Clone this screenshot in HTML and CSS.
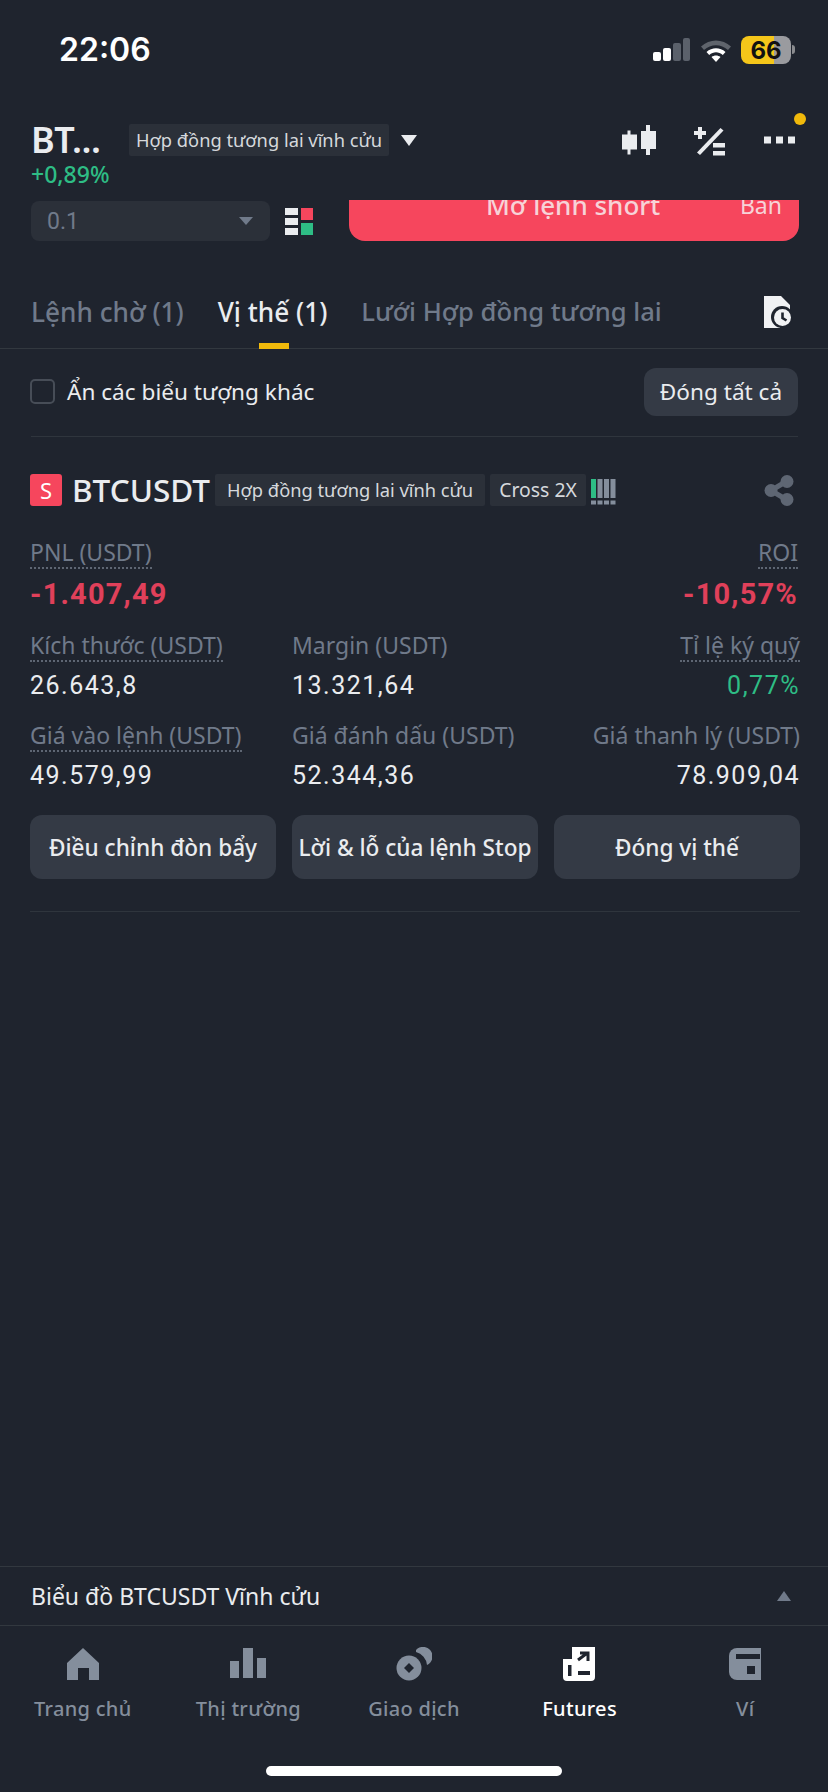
FILE: index.html
```html
<!DOCTYPE html>
<html lang="vi">
<head>
<meta charset="utf-8">
<title>BTCUSDT Futures</title>
<link rel="stylesheet" href="styles.css">
</head>
<body>
<div class="screen">
  <div class="status">
    <span class="time">22:06</span>
    <div class="status-icons">
      <svg class="signal" width="38" height="24" viewBox="0 0 38 24"><rect x="0" y="14" width="8" height="9" rx="2" fill="#fff"/><rect x="10" y="10" width="8" height="13" rx="2" fill="#fff"/><rect x="20" y="5" width="8" height="18" rx="2" fill="#5b616b"/><rect x="30" y="0" width="7" height="23" rx="2" fill="#5b616b"/></svg>
      <svg class="wifi" width="32" height="24" viewBox="0 0 32 24"><path d="M1 8.500C9.500 0.500 22.500 0.500 31 8.500L28 12C21 5.500 11 5.500 4 12Z" fill="#5f646c"/><path d="M6.500 14C12 9 20 9 25.500 14L22.800 17C18.500 13.400 13.500 13.400 9.200 17Z" fill="#fff"/><path d="M11.500 19C14.200 17 17.800 17 20.500 19L16 24Z" fill="#fff"/></svg>
      <div class="battery"><span>66</span></div>
      <span class="battery-nub"></span>
    </div>
  </div>

  <div class="head">
    <div class="head-top">
      <span class="pair">BT...</span>
      <span class="tag head-tag">Hợp đồng tương lai vĩnh cửu</span>
      <span class="caret-white"></span>
      <div class="head-icons">
        <svg width="34" height="31" viewBox="0 0 34 31"><path d="M5.500 5.500h3v4H15v15H8.500v5h-3v-5H0v-15h5.500z" fill="#eaecef"/><path d="M24 0h4v6h6v18h-6v6h-4v-6h-5V6h5z" fill="#eaecef"/></svg>
        <svg width="32" height="31" viewBox="0 0 32 31"><path d="M4 2h4v4h4v4H8v4H4v-4H0V6h4z" fill="#eaecef"/><path d="M26.500 3l3 2.500L6 30l-3-2.500z" fill="#eaecef"/><rect x="19" y="18" width="12" height="4.500" fill="#eaecef"/><rect x="19" y="26" width="12" height="4.500" fill="#eaecef"/></svg>
        <div class="more">
          <svg width="31" height="8" viewBox="0 0 31 8"><rect x="0" y="0.500" width="7" height="7" fill="#eaecef"/><rect x="12" y="0.500" width="7" height="7" fill="#eaecef"/><rect x="24" y="0.500" width="7" height="7" fill="#eaecef"/></svg>
          <span class="dot"></span>
        </div>
      </div>
    </div>
    <div class="change">+0,89%</div>
  </div>

  <div class="order-row">
    <div class="select"><span>0.1</span><span class="caret-grey"></span></div>
    <svg class="book" width="29" height="28" viewBox="0 0 29 28"><rect x="0" y="1" width="13" height="7" fill="#eaecef"/><rect x="0" y="11" width="13" height="7" fill="#eaecef"/><rect x="0" y="21" width="13" height="7" fill="#eaecef"/><rect x="16" y="1" width="12" height="12" fill="#f6465d"/><rect x="16" y="16" width="12" height="12" fill="#2ebd85"/></svg>
    <div class="short"><span class="short-title">Mở lệnh short</span><span class="short-side">Bán</span></div>
  </div>

  <div class="tabs">
    <span class="tab">Lệnh chờ (1)</span>
    <span class="tab active">Vị thế (1)</span>
    <span class="tab tab-grid">Lưới Hợp đồng tương lai</span>
    <svg class="history" width="29" height="32" viewBox="0 0 29 32"><path d="M0 0h17l9 9v14H16v9H0z" fill="#f1f2f4"/><circle cx="18" cy="21" r="11" fill="#1f242e"/><circle cx="18.500" cy="21.500" r="8.500" fill="#f1f2f4"/><path d="M18.500 16.500v5.500l4 2.500" stroke="#1f242e" stroke-width="2.600" fill="none"/></svg>
  </div>

  <div class="filter">
    <label class="check"><span class="box"></span>Ẩn các biểu tượng khác</label>
    <span class="btn-small">Đóng tất cả</span>
  </div>

  <div class="position">
    <div class="sym-row">
      <span class="side">S</span>
      <span class="symbol">BTCUSDT</span>
      <span class="tag">Hợp đồng tương lai vĩnh cửu</span>
      <span class="tag tag-cross">Cross 2X</span>
      <svg class="lev" width="25" height="26" viewBox="0 0 25 26"><rect x="0" y="0" width="5" height="19" fill="#2ebd85"/><rect x="6.500" y="0" width="5" height="19" fill="#848e9c"/><rect x="13" y="0" width="5" height="19" fill="#848e9c"/><rect x="19.500" y="0" width="5" height="19" fill="#848e9c"/><rect x="0" y="21.500" width="5" height="4" fill="#848e9c"/><rect x="6.500" y="21.500" width="5" height="4" fill="#848e9c"/><rect x="13" y="21.500" width="5" height="4" fill="#848e9c"/><rect x="19.500" y="21.500" width="5" height="4" fill="#848e9c"/></svg>
      <svg class="share" width="30" height="31" viewBox="0 0 30 31"><path d="M23 6L7 15.500L23 25" stroke="#5e6673" stroke-width="5" fill="none"/><circle cx="23" cy="6.500" r="6.500" fill="#5e6673"/><circle cx="7" cy="15.500" r="6.500" fill="#5e6673"/><circle cx="23" cy="24.500" r="6.500" fill="#5e6673"/></svg>
    </div>

    <div class="pnl">
      <div class="stat">
        <span class="label dotted">PNL (USDT)</span>
        <span class="big red">-1.407,49</span>
      </div>
      <div class="stat right">
        <span class="label dotted">ROI</span>
        <span class="big red">-10,57%</span>
      </div>
    </div>

    <div class="grid">
      <div class="stat"><span class="label dotted">Kích thước (USDT)</span><span class="val">26.643,8</span></div>
      <div class="stat"><span class="label">Margin (USDT)</span><span class="val">13.321,64</span></div>
      <div class="stat right"><span class="label dotted">Tỉ lệ ký quỹ</span><span class="val green">0,77%</span></div>
      <div class="stat"><span class="label dotted">Giá vào lệnh (USDT)</span><span class="val">49.579,99</span></div>
      <div class="stat"><span class="label">Giá đánh dấu (USDT)</span><span class="val">52.344,36</span></div>
      <div class="stat right"><span class="label">Giá thanh lý (USDT)</span><span class="val">78.909,04</span></div>
    </div>

    <div class="actions">
      <span class="btn">Điều chỉnh đòn bẩy</span>
      <span class="btn">Lời &amp; lỗ của lệnh Stop</span>
      <span class="btn">Đóng vị thế</span>
    </div>
  </div>

  <div class="spacer"></div>

  <div class="chart-bar">
    <span>Biểu đồ BTCUSDT Vĩnh cửu</span>
    <span class="caret-up"></span>
  </div>

  <nav class="nav">
    <div class="nav-item">
      <svg width="32" height="32" viewBox="0 0 32 32"><path d="M16 0L32 15V32H22V20H11V32H0V15Z" fill="#848e9c"/></svg>
      <span>Trang chủ</span>
    </div>
    <div class="nav-item">
      <svg width="36" height="32" viewBox="0 0 36 32"><rect x="0" y="13" width="9" height="17" fill="#848e9c"/><rect x="13" y="0" width="10" height="30" fill="#848e9c"/><rect x="27" y="10" width="9" height="20" fill="#848e9c"/></svg>
      <span>Thị trường</span>
    </div>
    <div class="nav-item">
      <svg width="36" height="32" viewBox="0 0 36 32"><path d="M20 2A9.500 9.500 0 1 1 31 17A15 15 0 0 0 20 4Z" fill="#848e9c"/><circle cx="13" cy="20" r="12.500" fill="#848e9c"/><path d="M13 15l5 5-5 5-5-5z" fill="#1f242e"/></svg>
      <span>Giao dịch</span>
    </div>
    <div class="nav-item active">
      <svg width="33" height="34" viewBox="0 0 33 34"><path d="M9 0H32V30a4 4 0 0 1-4 4H4a4 4 0 0 1-4-4V12H9Z" fill="#fff"/><path d="M15 13L23 7M17 6h8v8" stroke="#1f242e" stroke-width="3" fill="none"/><rect x="5" y="18" width="3.500" height="11" fill="#1f242e"/><rect x="15" y="24" width="12" height="4" fill="#1f242e"/></svg>
      <span>Futures</span>
    </div>
    <div class="nav-item">
      <svg width="32" height="32" viewBox="0 0 32 32"><path d="M8 0H32V32H8a8 8 0 0 1-8-8V8a8 8 0 0 1 8-8Z" fill="#848e9c"/><rect x="7" y="6" width="24" height="5" fill="#1f242e"/><rect x="18" y="18" width="8" height="8" fill="#1f242e"/></svg>
      <span>Ví</span>
    </div>
  </nav>

  <div class="home-wrap"><span class="home"></span></div>
</div>
</body>
</html>
```
FILE: styles.css
```css
* { box-sizing: border-box; }
html, body { margin: 0; padding: 0; }
body { background: #1f242e; font-family: "Noto Sans", "Open Sans", sans-serif; color: #eaecef; }
.screen { width: 828px; height: 1792px; display: flex; flex-direction: column; overflow: hidden; }

.status { height: 100px; padding: 30px 33px 0 59px; display: flex; justify-content: space-between; align-items: flex-start; }
.time { font-family: Inter, sans-serif; font-size: 32px; font-weight: 600; line-height: 40px; color: #fff; }
.status-icons { display: flex; align-items: flex-start; padding-top: 6px; }
.signal { margin: 2px 9px 0 0; }
.wifi { margin: 2px 9px 0 0; }
.battery { width: 50px; height: 28px; border-radius: 8px; background: linear-gradient(90deg, #f5c61a 0, #f5c61a 66%, #9a9b9f 66%, #9a9b9f 100%); display: flex; align-items: center; justify-content: center; font-family: Inter, sans-serif; font-weight: 700; font-size: 24px; color: #111; }
.battery-nub { width: 3px; height: 9px; margin: 9px 0 0 1px; border-radius: 0 3px 3px 0; background: #8a8b8f; }

.head { height: 100px; padding: 24px 30px 0 31px; }
.head-top { display: flex; align-items: center; height: 32px; }
.pair { font-size: 36px; font-weight: 600; line-height: 32px; width: 98px; color: #eaecef; letter-spacing: -0.5px; }
.tag { background: #2b3039; color: #d5d8dc; font-size: 18.3px; line-height: 32px; height: 32px; padding: 0 7px; border-radius: 2px; white-space: nowrap; }
.caret-white { width: 0; height: 0; margin-left: 12px; border-left: 8px solid transparent; border-right: 8px solid transparent; border-top: 11px solid #eaecef; }
.head-icons { margin-left: auto; display: flex; align-items: center; gap: 38px; padding-right: 3px; }
.more { position: relative; margin-top: -4px; }
.dot { position: absolute; right: -11px; top: -14px; width: 12px; height: 12px; border-radius: 50%; background: #f0b90b; }
.change { margin-top: 5px; font-size: 23px; font-weight: 500; line-height: 26px; color: #2ebd85; }

.order-row { height: 41px; padding: 0 29px 0 31px; display: flex; align-items: flex-start; }
.select { width: 239px; height: 40px; margin-top: 1px; background: #2b3039; border-radius: 8px; padding: 0 17px 0 16px; display: flex; justify-content: space-between; align-items: center; color: #707a8a; font-family: Roboto, sans-serif; font-size: 23px; }
.caret-grey { width: 0; height: 0; border-left: 7px solid transparent; border-right: 7px solid transparent; border-top: 8px solid #707a8a; }
.book { margin: 7px 35px 0 15px; }
.short { flex: 1; height: 41px; background: #f6465d; border-radius: 0 0 16px 16px; color: #f7d3d8; font-size: 26px; line-height: 41px; display: flex; overflow: hidden; padding-right: 17px; }
.short-title { margin: -15px 0 0 137px; font-weight: 500; height: 41px; }
.short-side { margin: -15px 0 0 auto; height: 41px; font-size: 23px; }

.tabs { height: 68px; margin-top: 40px; border-bottom: 1px solid #32383f; padding: 0 35px 0 31px; display: flex; align-items: flex-start; gap: 34px; position: relative; }
.tab { font-size: 26.2px; line-height: 36px; padding-top: 13px; height: 68px; font-weight: 500; color: #707a8a; white-space: nowrap; position: relative; }
.tab-grid { font-size: 25.6px; }
.tab.active { color: #eaecef; }
.tab.active::after { content: ""; position: absolute; left: 41px; bottom: 0; width: 30px; height: 6px; background: #f0b90b; }
.history { margin: 15px 0 0 auto; }

.filter { height: 88px; margin: 0 30px 0 31px; padding-bottom: 2px; border-bottom: 1px solid #2f353d; display: flex; justify-content: space-between; align-items: center; }
.check { display: flex; align-items: center; gap: 12px; font-size: 22.6px; color: #eaecef; }
.box { width: 25px; height: 25px; border: 2px solid #474d57; border-radius: 5px; margin-left: -1px; }
.btn-small { width: 154px; height: 48px; background: #343a45; border-radius: 12px; display: flex; align-items: center; justify-content: center; font-size: 22.6px; color: #eaecef; }

.position { margin: 0 28px 0 30px; height: 475px; border-bottom: 1px solid #2f353d; padding-top: 37px; }
.sym-row { display: flex; align-items: center; height: 32px; }
.side { width: 32px; height: 32px; border-radius: 3px; background: #f6465d; color: #fff; display: flex; align-items: center; justify-content: center; font-size: 22px; }
.symbol { font-size: 31.5px; font-weight: 500; margin: 0 5px 0 10px; color: #eaecef; line-height: 32px; }
.sym-row .tag { padding: 0 12px; }
.sym-row .tag + .tag { margin-left: 5px; }
.sym-row .tag-cross { font-size: 19.4px; padding: 0 9px; }
.lev { margin: 3px 0 0 5px; }
.share { margin-left: auto; margin-right: 6px; }

.pnl { display: flex; justify-content: space-between; margin-top: 31px; padding-right: 2px; }
.stat { display: flex; flex-direction: column; align-items: flex-start; }
.stat.right { align-items: flex-end; }
.label { font-size: 23px; line-height: 30px; color: #707a8a; white-space: nowrap; border-bottom: 2px solid transparent; }
.dotted { border-bottom: 2px dotted #5e6673; }
.big { font-family: Roboto, sans-serif; font-size: 29px; font-weight: 700; line-height: 40px; letter-spacing: 1.2px; margin-top: 5px; }
.red { color: #e0405a; }
.val { font-family: Roboto, sans-serif; font-size: 25px; line-height: 36px; letter-spacing: 1.5px; margin-top: 6px; color: #eaecef; }
.green { color: #2ebd85; }

.grid { display: grid; grid-template-columns: 246px 246px 246px; column-gap: 16px; row-gap: 16px; margin-top: 16px; }

.actions { display: grid; grid-template-columns: 246px 246px 246px; column-gap: 16px; margin-top: 21px; margin-right: -2px; }
.btn { height: 64px; border-radius: 12px; background: #343a45; display: flex; align-items: center; justify-content: center; font-size: 22.6px; font-weight: 500; white-space: nowrap; color: #eaecef; }

.spacer { flex: 1; }

.chart-bar { height: 60px; border-top: 1px solid #32383f; border-bottom: 1px solid #32383f; padding: 0 30px 0 31px; display: flex; justify-content: space-between; align-items: center; font-size: 23px; }
.caret-up { width: 0; height: 0; border-left: 7px solid transparent; border-right: 7px solid transparent; border-bottom: 10px solid #707a8a; margin-right: 7px; }

.nav { height: 122px; display: grid; grid-template-columns: repeat(5, 1fr); padding-top: 21px; }
.nav-item { display: flex; flex-direction: column; align-items: center; font-size: 20px; font-weight: 500; color: #848e9c; letter-spacing: 0.3px; }
.nav-item svg { height: 34px; margin-bottom: 14px; }
.nav-item.active { color: #fff; }

.home-wrap { height: 44px; display: flex; justify-content: center; }
.home { width: 296px; height: 10px; border-radius: 5px; background: #fff; margin-top: 18px; }
```
